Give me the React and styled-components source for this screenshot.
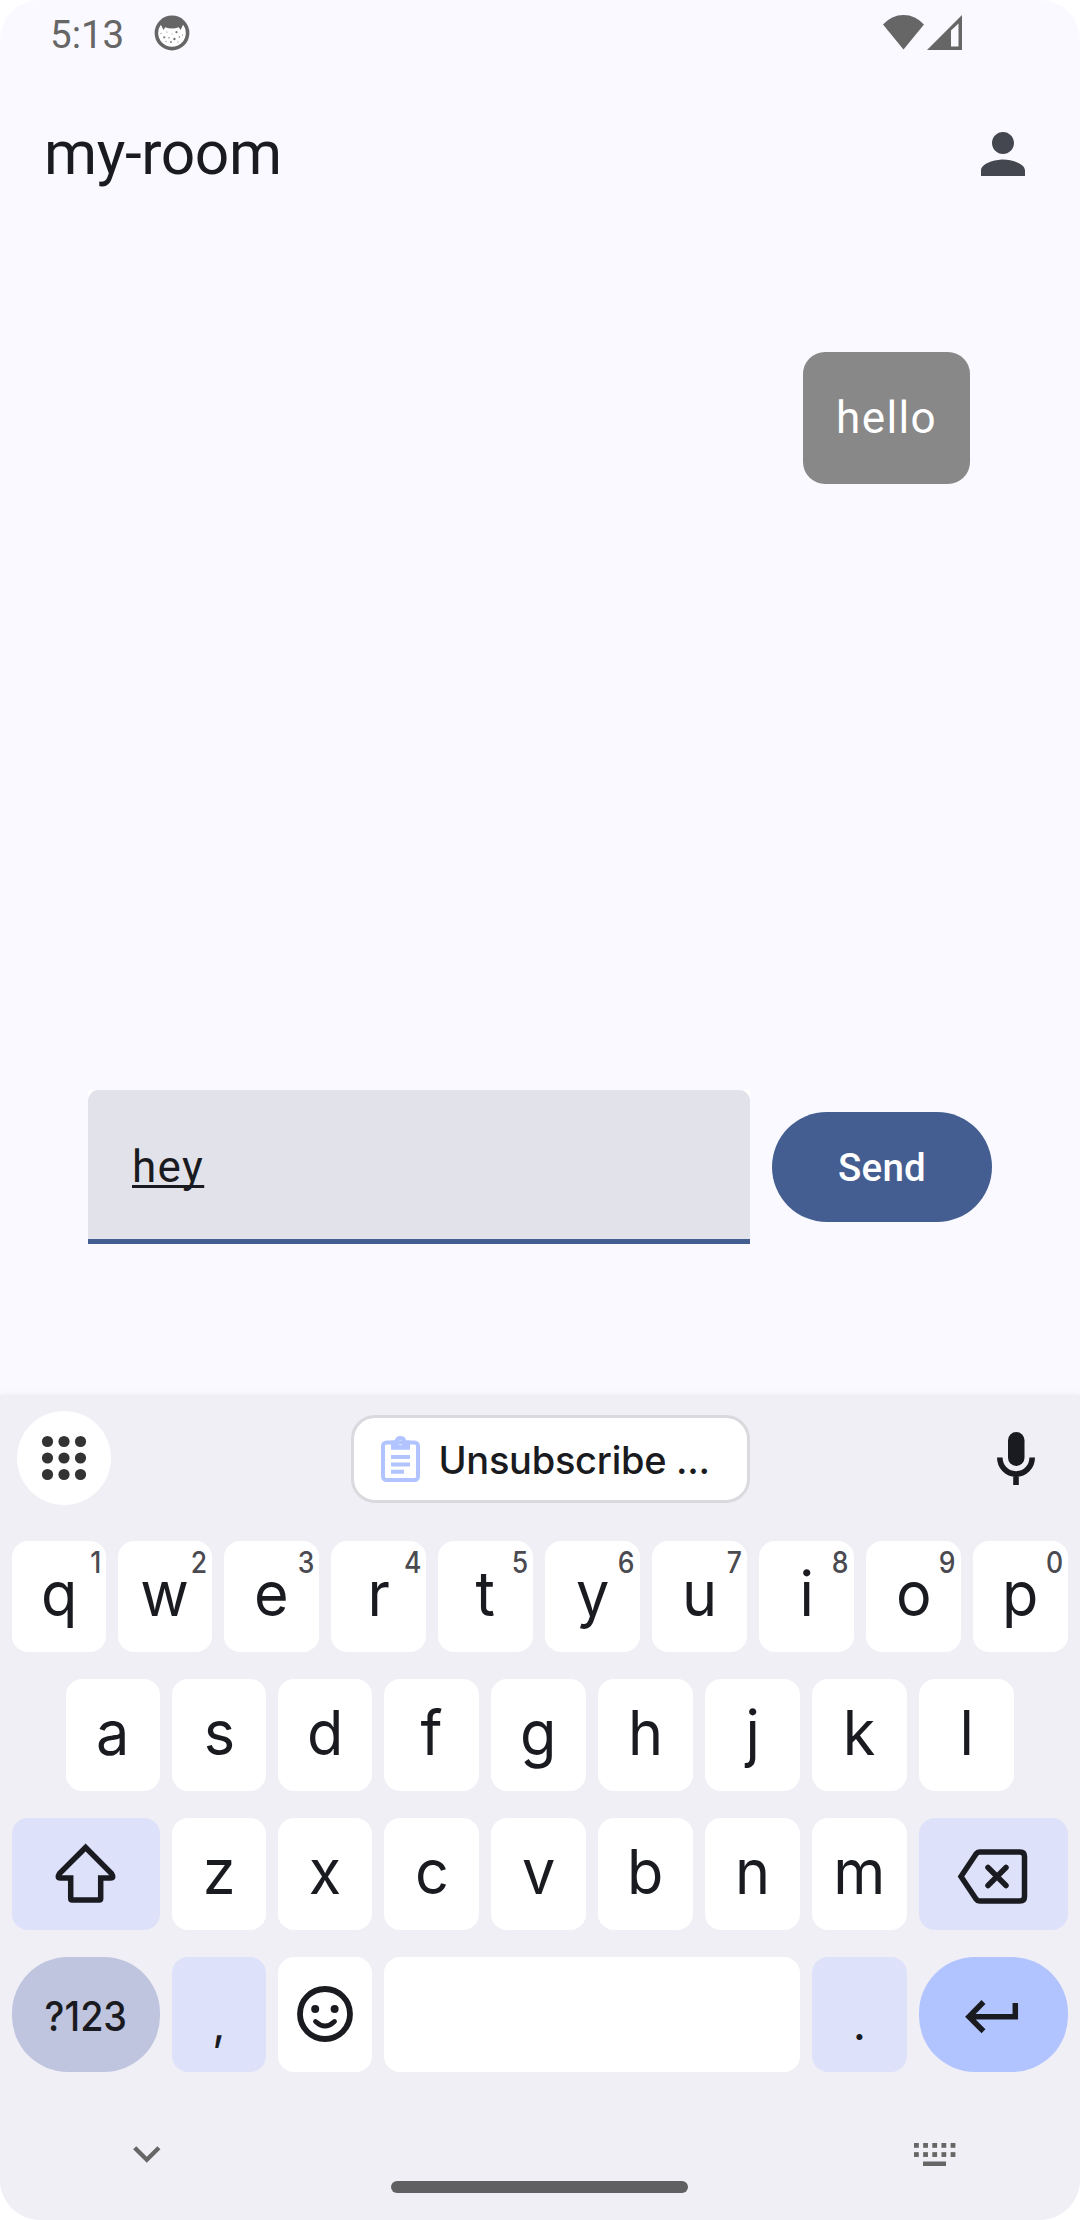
import React from "react";
import styled, { createGlobalStyle } from "styled-components";

const GlobalStyle = createGlobalStyle`
  html, body { margin: 0; padding: 0; background: #ffffff; }
  *, *::before, *::after { box-sizing: border-box; }
  button, input { font: inherit; border: 0; margin: 0; padding: 0; }
`;

const ROBOTO = `Roboto, "Liberation Sans", sans-serif`;
const KEY_FONT = `Inter, Roboto, sans-serif`;

const Screen = styled.div`
  width: 1080px;
  height: 2220px;
  display: flex;
  flex-direction: column;
  overflow: hidden;
  border-radius: 40px;
  background: #faf9ff;
  font-family: ${ROBOTO};
  color: #1a1b20;
`;

const StatusBar = styled.div`
  flex: none;
  height: 66px;
  padding: 0 118px 0 50px;
  display: flex;
  align-items: center;
  justify-content: space-between;
  color: #666666;
`;

const StatusGroup = styled.div`
  display: flex;
  align-items: center;
  gap: ${(p) => p.$gap}px;
`;

const Clock = styled.span`
  font-size: 38.5px;
  line-height: 66px;
  padding-top: 3px;
`;

const AppBar = styled.header`
  flex: none;
  height: 176px;
  padding: 0 44px;
  display: flex;
  align-items: center;
  justify-content: space-between;
`;

const Title = styled.h1`
  margin: 0;
  font-size: 60.5px;
  font-weight: 400;
  letter-spacing: -0.4px;
  line-height: 76px;
`;

const Messages = styled.main`
  flex: 1;
  padding: 110px 110px 0;
  display: flex;
  flex-direction: column;
  align-items: flex-end;
`;

const Bubble = styled.div`
  height: 132px;
  padding: 0 33px;
  border-radius: 22px;
  background: #888888;
  color: #ffffff;
  font-size: 44px;
  letter-spacing: 1.375px;
  line-height: 132px;
`;

const Composer = styled.div`
  flex: none;
  height: 305px;
  padding: 0 88px;
  display: flex;
  align-items: flex-start;
  gap: 22px;
`;

const FieldFrame = styled.div`
  width: 662px;
  height: 154px;
  background: #ffffff;
`;

const Field = styled.div`
  height: 154px;
  padding: 0 44px;
  border-radius: 11px 11px 0 0;
  background: linear-gradient(#445e91, #445e91) bottom / 100% 5.5px no-repeat, #e2e2eb;
  font-size: 44px;
  letter-spacing: 1.375px;
  line-height: 154px;
`;

const Composing = styled.span`
  text-decoration: underline;
  text-decoration-thickness: 2.6px;
  text-underline-offset: 3px;
  text-decoration-skip-ink: none;
`;

const SendButton = styled.button`
  width: 220px;
  height: 110px;
  margin-top: 22px;
  border-radius: 55px;
  background: #445e91;
  color: #ffffff;
  font-size: 38.5px;
  font-weight: 500;
  letter-spacing: 0.275px;
`;

const Keyboard = styled.section`
  flex: none;
  height: 825px;
  display: flex;
  flex-direction: column;
  background: #f0eff6;
  box-shadow: 0 0 6px rgba(120, 118, 140, 0.1);
  font-family: ${KEY_FONT};
  color: #1a1b20;
`;

const Suggestions = styled.div`
  height: 146px;
  padding: 16px 45px 0 17px;
  display: flex;
  align-items: flex-start;
  justify-content: space-between;
`;

const MenuButton = styled.button`
  width: 94px;
  height: 94px;
  border-radius: 50%;
  background: #ffffff;
`;

const ClipChip = styled.button`
  width: 399px;
  height: 88px;
  margin: 4px 0 0 -7px;
  padding: 0 0 0 27px;
  display: flex;
  align-items: center;
  gap: 18.5px;
  border: 3px solid #dad9de;
  border-radius: 24px;
  background: #ffffff;
  color: #1a1b20;
`;

const ClipText = styled.span`
  padding-top: 2px;
  font-size: 38px;
  font-weight: 500;
  letter-spacing: -0.28px;
  line-height: 82px;
  white-space: nowrap;
`;

const MicSlot = styled.div`
  height: 94px;
  display: flex;
  align-items: center;
`;

const Row = styled.div`
  display: grid;
  grid-template-columns: ${(p) => p.$columns};
  column-gap: 12px;
  height: ${(p) => p.$height}px;
  margin-bottom: ${(p) => p.$after}px;
  padding: 0 ${(p) => p.$inset || 12}px;
`;

const tones = { plain: "#ffffff", soft: "#dde1f9", mode: "#c0c5df", action: "#b1c4ff" };

const Key = styled.button`
  position: relative;
  display: flex;
  justify-content: center;
  min-width: 0;
  overflow: hidden;
  border-radius: ${(p) => (p.$pill ? 56 : 16)}px;
  background: ${(p) => tones[p.$tone || "plain"]};
  color: #1a1b20;
`;

const Letter = styled.span`
  font-size: 62.5px;
  line-height: ${(p) => p.$line || 106}px;
  transform: scaleX(0.95);
`;

const Hint = styled.span`
  position: absolute;
  top: 3px;
  right: 5px;
  font-size: 29.5px;
  font-weight: 500;
  line-height: 36px;
  color: #4a4a50;
  transform: scaleX(0.9);
  transform-origin: right;
`;

const ModeLabel = styled.span`
  font-size: 41px;
  font-weight: 500;
  line-height: 118px;
  transform: scaleX(0.92);
`;

const Punctuation = styled.span`
  font-size: 46px;
  line-height: 133px;
`;

const NavBar = styled.div`
  flex: 1;
  display: grid;
  grid-template-columns: 391px 297px 1fr;
`;

const NavSlot = styled.div`
  padding: ${(p) => p.$pad};
`;

const HomeHandle = styled.div`
  height: 12px;
  margin-top: 109px;
  border-radius: 6px;
  background: #606062;
`;

const Svg = styled.svg`
  display: block;
  flex: none;
`;

const CatIcon = () => (
  <Svg width="36" height="36" viewBox="0 0 36 36">
    <circle cx="18" cy="18" r="15.6" fill="#fff" stroke="#666" strokeWidth="3.6" />
    <path d="M6 8 Q18 -3 30 8 L28.5 11 L26.5 15 L24.8 12.2 Q18 15 11.2 12.2 L9.5 15 L7.5 11 Z" fill="#666" />
    <g fill="#777">
      <circle cx="22.5" cy="17.2" r="1.1" /><circle cx="10.3" cy="22.3" r="1.1" />
      <circle cx="20.4" cy="24" r="1.2" /><circle cx="17" cy="27" r="0.9" />
      <circle cx="13" cy="17" r="0.6" /><circle cx="15" cy="22.7" r="0.7" />
      <circle cx="25.4" cy="22" r="0.8" /><circle cx="28.5" cy="20" r="0.6" />
      <circle cx="18" cy="19" r="0.5" /><circle cx="24" cy="27" r="0.6" />
      <circle cx="12" cy="26.5" r="0.6" /><circle cx="7" cy="18.5" r="0.6" />
    </g>
  </Svg>
);

const WifiIcon = () => (
  <Svg width="41" height="36" viewBox="0 0 41 36">
    <path d="M0 9.5 Q8.5 0 20.5 0 Q32.500 0 41 9.500 L20.500 34.500 Z" fill="#666" />
  </Svg>
);

const SignalIcon = () => (
  <Svg width="35" height="36" viewBox="0 0 35 36">
    <path fillRule="evenodd" d="M0 35 L35 0 V35 Z M24 15.500 V31.500 H31.500 V8.500 Z" fill="#666" />
  </Svg>
);

const PersonIcon = () => (
  <Svg width="66" height="66" viewBox="0 0 24 24" fill="#44474f">
    <path d="M12 12c2.210 0 4-1.790 4-4s-1.790-4-4-4-4 1.790-4 4 1.790 4 4 4zm0 2c-2.670 0-8 1.340-8 4v2h16v-2c0-2.660-5.330-4-8-4z" />
  </Svg>
);

const GridIcon = () => (
  <Svg width="94" height="94" viewBox="0 0 94 94" fill="#333">
    {[30.5, 47, 63.5].map((y) =>
      [30.5, 47, 63.5].map((x) => <circle key={`${x}-${y}`} cx={x} cy={y} r="5.6" />)
    )}
  </Svg>
);

const ClipboardIcon = () => (
  <Svg width="39" height="47" viewBox="0 0 39 47">
    <rect x="2" y="6.4" width="35" height="37.600" rx="3.500" fill="none" stroke="#b1c4ff" strokeWidth="4" />
    <path fillRule="evenodd" fill="#b1c4ff" d="M10 4.500 H13.700 A6 6 0 0 1 25.300 4.500 H29 V13.700 H10 Z M19.500 4.300 a2.500 2.500 0 1 0 0 5 a2.500 2.500 0 1 0 0 -5 Z" />
    <path d="M10 21 H29 M10 28.400 H29 M10 35.700 H23" stroke="#b1c4ff" strokeWidth="4" />
  </Svg>
);

const MicIcon = () => (
  <Svg width="38" height="53" viewBox="0 0 38 53">
    <rect x="11" y="0" width="16.500" height="34" rx="8.250" fill="#1a1b20" />
    <path d="M2.800 25.500 C2.800 35 10 42 19 42 C28 42 35.200 35 35.200 25.500 M19 42 V53" fill="none" stroke="#1a1b20" strokeWidth="5.600" />
  </Svg>
);

const ShiftIcon = () => (
  <Svg width="148" height="112" viewBox="0 0 148 112">
    <path d="M73.600 29.500 L99.500 55.500 Q102.500 60 98.500 60 H88.700 V80.500 Q88.700 82 87.200 82 H60.200 Q58.700 82 58.700 80.500 V60 H48.500 Q44.500 60 47.500 55.500 Z" fill="none" stroke="#1a1b20" strokeWidth="5.500" />
  </Svg>
);

const BackspaceIcon = () => (
  <Svg width="149" height="112" viewBox="0 0 149 112">
    <path d="M42 58.500 L57 36 Q58.500 34 60.500 34 H101 Q105.500 34 105.500 38.500 V78.500 Q105.500 83 101 83 H60.500 Q58.500 83 57 81 Z" fill="none" stroke="#1a1b20" strokeWidth="5.500" />
    <path d="M69 49.500 L87 67.500 M87 49.500 L69 67.500" stroke="#1a1b20" strokeWidth="5.500" strokeLinecap="round" />
  </Svg>
);

const SmileIcon = () => (
  <Svg width="94" height="115" viewBox="0 0 94 115">
    <circle cx="47" cy="57" r="25" fill="none" stroke="#1a1b20" strokeWidth="5.800" />
    <circle cx="37.200" cy="52" r="4" fill="#1a1b20" />
    <circle cx="56.600" cy="52" r="4" fill="#1a1b20" />
    <path d="M37.500 64.500 Q47 73.500 56.500 64.500" fill="none" stroke="#1a1b20" strokeWidth="4.800" strokeLinecap="round" />
  </Svg>
);

const EnterIcon = () => (
  <Svg width="149" height="115" viewBox="0 0 149 115">
    <path d="M64.500 45 L50 59.700 L64.500 74.300 M51 59.700 H96.300 V46" fill="none" stroke="#1a1b20" strokeWidth="5.500" />
  </Svg>
);

const ChevronIcon = () => (
  <Svg width="28" height="17" viewBox="0 0 28 17">
    <path d="M1.700 1.700 L13.800 13.700 L25.900 1.700" fill="none" stroke="#666" strokeWidth="4.400" />
  </Svg>
);

const KeyboardIcon = () => (
  <Svg width="42" height="24" viewBox="0 0 42 24" fill="#666">
    {[0, 9.15].map((y) =>
      [0, 9.15, 18.3, 27.45, 36.6].map((x) => <rect key={`${x}-${y}`} x={x} y={y} width="4.800" height="4.800" />)
    )}
    <rect x="9" y="18.500" width="23" height="4.500" />
  </Svg>
);

const top = "qwertyuiop".split("");
const middle = "asdfghjkl".split("");
const bottom = "zxcvbnm".split("");

export default function App() {
  return (
    <>
      <GlobalStyle />
      <Screen>
        <StatusBar>
          <StatusGroup $gap={30}>
            <Clock>5:13</Clock>
            <CatIcon />
          </StatusGroup>
          <StatusGroup $gap={3}>
            <WifiIcon />
            <SignalIcon />
          </StatusGroup>
        </StatusBar>
        <AppBar>
          <Title>my-room</Title>
          <PersonIcon />
        </AppBar>
        <Messages>
          <Bubble>hello</Bubble>
        </Messages>
        <Composer>
          <FieldFrame>
            <Field>
              <Composing>hey</Composing>
            </Field>
          </FieldFrame>
          <SendButton>Send</SendButton>
        </Composer>
        <Keyboard>
          <Suggestions>
            <MenuButton><GridIcon /></MenuButton>
            <ClipChip>
              <ClipboardIcon />
              <ClipText>Unsubscribe ...</ClipText>
            </ClipChip>
            <MicSlot><MicIcon /></MicSlot>
          </Suggestions>
          <Row $columns="94px 94px repeat(8, 95px)" $height={111} $after={27}>
            {top.map((c, i) => (
              <Key key={c}>
                <Letter $line={104}>{c}</Letter>
                <Hint>{(i + 1) % 10}</Hint>
              </Key>
            ))}
          </Row>
          <Row $columns="repeat(3, 94px) repeat(6, 95px)" $height={112} $after={27} $inset={66}>
            {middle.map((c) => (
              <Key key={c}><Letter>{c}</Letter></Key>
            ))}
          </Row>
          <Row $columns="148px 94px 94px repeat(5, 95px) 149px" $height={112} $after={27}>
            <Key $tone="soft"><ShiftIcon /></Key>
            {bottom.map((c) => (
              <Key key={c}><Letter>{c}</Letter></Key>
            ))}
            <Key $tone="soft"><BackspaceIcon /></Key>
          </Row>
          <Row $columns="148px 94px 94px 416px 95px 149px" $height={115} $after={0}>
            <Key $tone="mode" $pill><ModeLabel>?123</ModeLabel></Key>
            <Key $tone="soft"><Punctuation>,</Punctuation></Key>
            <Key><SmileIcon /></Key>
            <Key />
            <Key $tone="soft"><Punctuation>.</Punctuation></Key>
            <Key $tone="action" $pill><EnterIcon /></Key>
          </Row>
          <NavBar>
            <NavSlot $pad="74px 0 0 133px"><ChevronIcon /></NavSlot>
            <HomeHandle />
            <NavSlot $pad="71px 0 0 226px"><KeyboardIcon /></NavSlot>
          </NavBar>
        </Keyboard>
      </Screen>
    </>
  );
}
